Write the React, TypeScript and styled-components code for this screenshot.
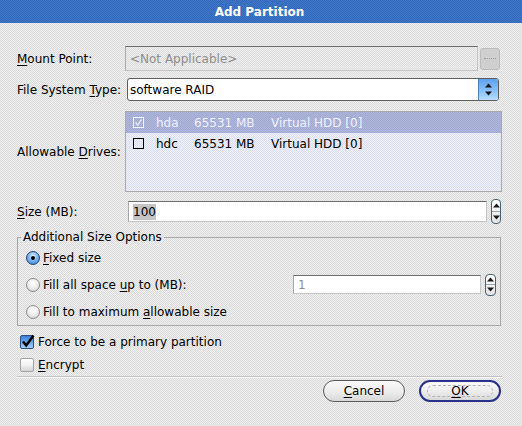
import React from "react";
import styled, { createGlobalStyle } from "styled-components";

const GlobalStyle = createGlobalStyle`
  html, body { margin: 0; padding: 0; }
  body {
    font-family: "DejaVu Sans", "Liberation Sans", sans-serif;
    font-size: 12px;
    color: #000;
  }
`;

const dither = `repeating-conic-gradient(#efefef 0 25%, #dbdbdb 0 50%) 0 0 / 2px 2px`;

const Window = styled.div`
  width: 522px;
  height: 426px;
  background: ${dither};
  display: flex;
  flex-direction: column;
  overflow: hidden;
`;

const TitleBar = styled.div`
  flex: none;
  height: 23px;
  background: repeating-conic-gradient(#4079cb 0 25%, #3267b8 0 50%) 0 0 / 2px 2px;
  color: #fff;
  font-weight: bold;
  font-size: 12px;
  display: flex;
  align-items: center;
  justify-content: center;
  padding-right: 3px;
`;

const Body = styled.div`
  display: flex;
  flex-direction: column;
  padding: 23px 20px 0 17px;
`;

const FormRow = styled.div<{ $top: number; $h: number }>`
  display: grid;
  grid-template-columns: 108px 1fr;
  align-items: center;
  margin-top: ${(p) => p.$top}px;
  height: ${(p) => p.$h}px;
`;

const Label = styled.span`
  white-space: nowrap;
`;

const U = styled.span`
  text-decoration: underline;
  text-underline-offset: 2px;
`;

const Control = styled.div<{ $ml?: number; $mr?: number }>`
  display: flex;
  align-items: center;
  height: 100%;
  margin-left: ${(p) => p.$ml ?? 0}px;
  margin-right: ${(p) => p.$mr ?? 0}px;
  min-width: 0;
`;

const Entry = styled.div<{ $disabled?: boolean; $dimText?: boolean; $h?: number; $w?: number }>`
  box-sizing: border-box;
  ${(p) => (p.$w ? `width: ${p.$w}px; flex: none;` : `flex: 1;`)}
  height: ${(p) => (p.$h ? `${p.$h}px` : "100%")};
  border: 1px solid #c6c6c6;
  border-top-color: #6c6c6c;
  border-left-color: #a8a8a8;
  background: ${(p) => (p.$disabled ? dither : "#fff")};
  color: ${(p) => (p.$disabled || p.$dimText ? "#8e8e8e" : "#000")};
  display: flex;
  align-items: center;
  padding-left: 4px;
  white-space: nowrap;
`;

const Selected = styled.span`
  background: #c4c4c4;
  padding: 1px 0;
`;

const BrowseButton = styled.div`
  flex: none;
  box-sizing: border-box;
  width: 20px;
  height: 22px;
  margin-left: 2px;
  border: 1px solid #bcbcbc;
  border-radius: 3px;
  background: #cfcfcf;
  display: flex;
  align-items: center;
  justify-content: center;
  &::after {
    content: "";
    width: 12px;
    border-top: 1px dotted #9a9a9a;
  }
`;

const Combo = styled.div`
  flex: 1;
  box-sizing: border-box;
  height: 100%;
  border: 1px solid #5e5e5e;
  border-radius: 3px;
  background: #fff;
  display: flex;
  align-items: center;
  overflow: hidden;
`;

const ComboText = styled.span`
  flex: 1;
  padding-left: 2px;
`;

const ComboArrow = styled.div`
  flex: none;
  width: 19px;
  height: 100%;
  background: linear-gradient(180deg, #5ea0ee 0%, #8cc4fb 60%, #b8dcff 100%);
  border-left: 1px solid #4a7fc0;
  display: flex;
  align-items: center;
  justify-content: center;
`;

const DriveList = styled.div`
  flex: 1;
  height: 100%;
  box-sizing: border-box;
  border: 1px solid #a9a9a9;
  background: repeating-conic-gradient(#eff1fa 0 25%, #dadeef 0 50%) 0 0 / 2px 2px;
  display: flex;
  flex-direction: column;
`;

const DriveRow = styled.div<{ $selected?: boolean }>`
  display: grid;
  grid-template-columns: 23px 38px 77px 1fr;
  align-items: center;
  height: 21px;
  padding-left: 7px;
  background: ${(p) =>
    p.$selected
      ? "repeating-conic-gradient(#b0b8dc 0 25%, #a0a8d2 0 50%) 0 0 / 2px 2px"
      : "transparent"};
  color: ${(p) => (p.$selected ? "#eef0ff" : "#000")};
  white-space: nowrap;
`;

const ListCheck = styled.div<{ $light?: boolean }>`
  box-sizing: border-box;
  width: 11px;
  height: 11px;
  border: 1px solid ${(p) => (p.$light ? "#f4f6ff" : "#000")};
  display: flex;
  align-items: center;
  justify-content: center;
`;

const SpinBox = styled.div<{ $h: number; $w: number; $ml: number }>`
  flex: none;
  box-sizing: border-box;
  width: ${(p) => p.$w}px;
  height: ${(p) => p.$h}px;
  margin-left: ${(p) => p.$ml}px;
  border: 1px solid #46616f;
  border-radius: 4px;
  background: linear-gradient(180deg, #ffffff, #e4e4e4);
  display: flex;
  flex-direction: column;
  align-items: center;
  justify-content: space-evenly;
`;

const SpinSep = styled.div`
  width: 100%;
  border-top: 1px solid #9aa8b0;
`;

const Frame = styled.fieldset`
  margin: 6px 1px 0 0;
  padding: 0 4px 0 8px;
  min-width: 0;
  border: 1px solid #a6a6a6;
  display: flex;
  flex-direction: column;
`;

const Legend = styled.legend`
  padding: 0 2px;
  margin-left: -5px;
  line-height: 14px;
  font-size: 12px;
`;

const OptionRow = styled.div`
  display: flex;
  align-items: center;
  height: 27px;
  white-space: nowrap;
`;

const Radio = styled.div<{ $on?: boolean }>`
  flex: none;
  box-sizing: border-box;
  width: 14px;
  height: 14px;
  margin-right: 3px;
  border-radius: 50%;
  border: 1px solid ${(p) => (p.$on ? "#27456f" : "#8c8c8c")};
  background: ${(p) =>
    p.$on
      ? "radial-gradient(circle at 50% 35%, #e4f2ff 0%, #7fb8f2 45%, #2c72cf 100%)"
      : "radial-gradient(circle at 50% 35%, #ffffff 0%, #eeeeee 50%, #c4c4c4 100%)"};
  display: flex;
  align-items: center;
  justify-content: center;
  &::after {
    content: "";
    display: ${(p) => (p.$on ? "block" : "none")};
    width: 4px;
    height: 4px;
    border-radius: 50%;
    background: #000;
  }
`;

const Spacer = styled.div`
  flex: 1;
`;

const CheckRow = styled.div<{ $top?: number }>`
  display: flex;
  align-items: center;
  height: 23px;
  margin-top: ${(p) => p.$top ?? 0}px;
  padding-left: 3px;
  white-space: nowrap;
`;

const CheckBox = styled.div<{ $on?: boolean }>`
  flex: none;
  box-sizing: border-box;
  width: 14px;
  height: 14px;
  margin-right: 4px;
  border-radius: 2px;
  border: 1px solid ${(p) => (p.$on ? "#2b4e7e" : "#a2a2a2")};
  background: ${(p) =>
    p.$on
      ? "linear-gradient(180deg, #3b7ed8 0%, #74aef0 60%, #a6d0fb 100%)"
      : "linear-gradient(180deg, #ffffff 0%, #f0f0f0 50%, #d6d6d6 100%)"};
  position: relative;
`;

const CheckMark = styled.svg`
  position: absolute;
  left: -1px;
  top: -3px;
`;

const Separator = styled.div`
  height: 1px;
  background: #c2c2c2;
  border-bottom: 1px solid #f8f8f8;
`;

const ButtonRow = styled.div`
  display: flex;
  justify-content: flex-end;
  gap: 14px;
  margin-top: 2px;
  padding-right: 1px;
`;

const PillButton = styled.div<{ $w: number; $default?: boolean }>`
  box-sizing: border-box;
  width: ${(p) => p.$w}px;
  height: 22px;
  border-radius: 11px;
  border: ${(p) => (p.$default ? "2px solid #27308a" : "1px solid #5a5a5a")};
  background: linear-gradient(180deg, #fafafa 0%, #ececec 55%, #d8d8d8 100%);
  display: flex;
  align-items: center;
  justify-content: center;
  position: relative;
  &::after {
    content: "";
    display: ${(p) => (p.$default ? "block" : "none")};
    position: absolute;
    inset: 3px 6px;
    border: 1px dashed #b4b4b4;
    border-radius: 8px;
  }
`;

const ButtonText = styled.span`
  position: relative;
  z-index: 1;
`;

const UpDown = () => (
  <svg width="9" height="15" viewBox="0 0 9 15">
    <path d="M1 5.5 L4.5 1.5 L8 5.5 Z" fill="#111" />
    <path d="M1 9.5 L8 9.5 L4.5 13.5 Z" fill="#111" />
  </svg>
);

const Up = () => (
  <svg width="7" height="5" viewBox="0 0 7 5">
    <path d="M0 4.5 L3.5 0.5 L7 4.5 Z" fill="#1a1a1a" />
  </svg>
);

const Down = () => (
  <svg width="7" height="5" viewBox="0 0 7 5">
    <path d="M0 0.5 L7 0.5 L3.5 4.5 Z" fill="#1a1a1a" />
  </svg>
);

const Spin = ({ h, w, ml }: { h: number; w: number; ml: number }) => (
  <SpinBox $h={h} $w={w} $ml={ml}>
    <Up />
    <SpinSep />
    <Down />
  </SpinBox>
);

const drives = [
  { name: "hda", size: "65531 MB", model: "Virtual HDD [0]", selected: true, checked: true },
  { name: "hdc", size: "65531 MB", model: "Virtual HDD [0]", selected: false, checked: false },
];

export default function App() {
  return (
    <Window>
      <GlobalStyle />
      <TitleBar>Add Partition</TitleBar>
      <Body>
        <FormRow $top={0} $h={25}>
          <Label>
            <U>M</U>ount Point:
          </Label>
          <Control $mr={2}>
            <Entry $disabled>&lt;Not Applicable&gt;</Entry>
            <BrowseButton />
          </Control>
        </FormRow>

        <FormRow $top={7} $h={23}>
          <Label>
            File System <U>T</U>ype:
          </Label>
          <Control $ml={2} $mr={3}>
            <Combo>
              <ComboText>software RAID</ComboText>
              <ComboArrow>
                <UpDown />
              </ComboArrow>
            </Combo>
          </Control>
        </FormRow>

        <FormRow $top={10} $h={81}>
          <Label>
            Allowable <U>D</U>rives:
          </Label>
          <Control>
            <DriveList>
              {drives.map((d) => (
                <DriveRow key={d.name} $selected={d.selected}>
                  <ListCheck $light={d.selected}>
                    {d.checked && (
                      <svg width="9" height="9" viewBox="0 0 9 9">
                        <path d="M1.5 4.5 L3.8 7 L7.5 1.5" stroke="#f4f6ff" strokeWidth="1.2" fill="none" />
                      </svg>
                    )}
                  </ListCheck>
                  <span>{d.name}</span>
                  <span>{d.size}</span>
                  <span>{d.model}</span>
                </DriveRow>
              ))}
            </DriveList>
          </Control>
        </FormRow>

        <FormRow $top={7} $h={25}>
          <Label>
            <U>S</U>ize (MB):
          </Label>
          <Control $ml={3} $mr={1}>
            <Entry $h={21}>
              <Selected>100</Selected>
            </Entry>
            <Spin h={25} w={10} ml={4} />
          </Control>
        </FormRow>

        <Frame>
          <Legend>Additional Size Options</Legend>
          <OptionRow>
            <Radio $on />
            <span>
              <U>F</U>ixed size
            </span>
          </OptionRow>
          <OptionRow>
            <Radio />
            <span>
              Fill all space <U>u</U>p to (MB):
            </span>
            <Spacer />
            <Entry $dimText $w={188} $h={19}>
              1
            </Entry>
            <Spin h={22} w={11} ml={4} />
          </OptionRow>
          <OptionRow>
            <Radio />
            <span>
              Fill to maximum <U>a</U>llowable size
            </span>
          </OptionRow>
        </Frame>

        <CheckRow $top={4}>
          <CheckBox $on>
            <CheckMark width="16" height="16" viewBox="0 0 16 16">
              <path d="M3 8.5 L6.2 12.5 L13.5 2.5" stroke="#000" strokeWidth="2.4" fill="none" />
            </CheckMark>
          </CheckBox>
          <span>Force to be a primary partition</span>
        </CheckRow>
        <CheckRow>
          <CheckBox />
          <span>
            <U>E</U>ncrypt
          </span>
        </CheckRow>

        <Separator />

        <ButtonRow>
          <PillButton $w={82}>
            <ButtonText>
              <U>C</U>ancel
            </ButtonText>
          </PillButton>
          <PillButton $w={82} $default>
            <ButtonText>
              <U>O</U>K
            </ButtonText>
          </PillButton>
        </ButtonRow>
      </Body>
    </Window>
  );
}
